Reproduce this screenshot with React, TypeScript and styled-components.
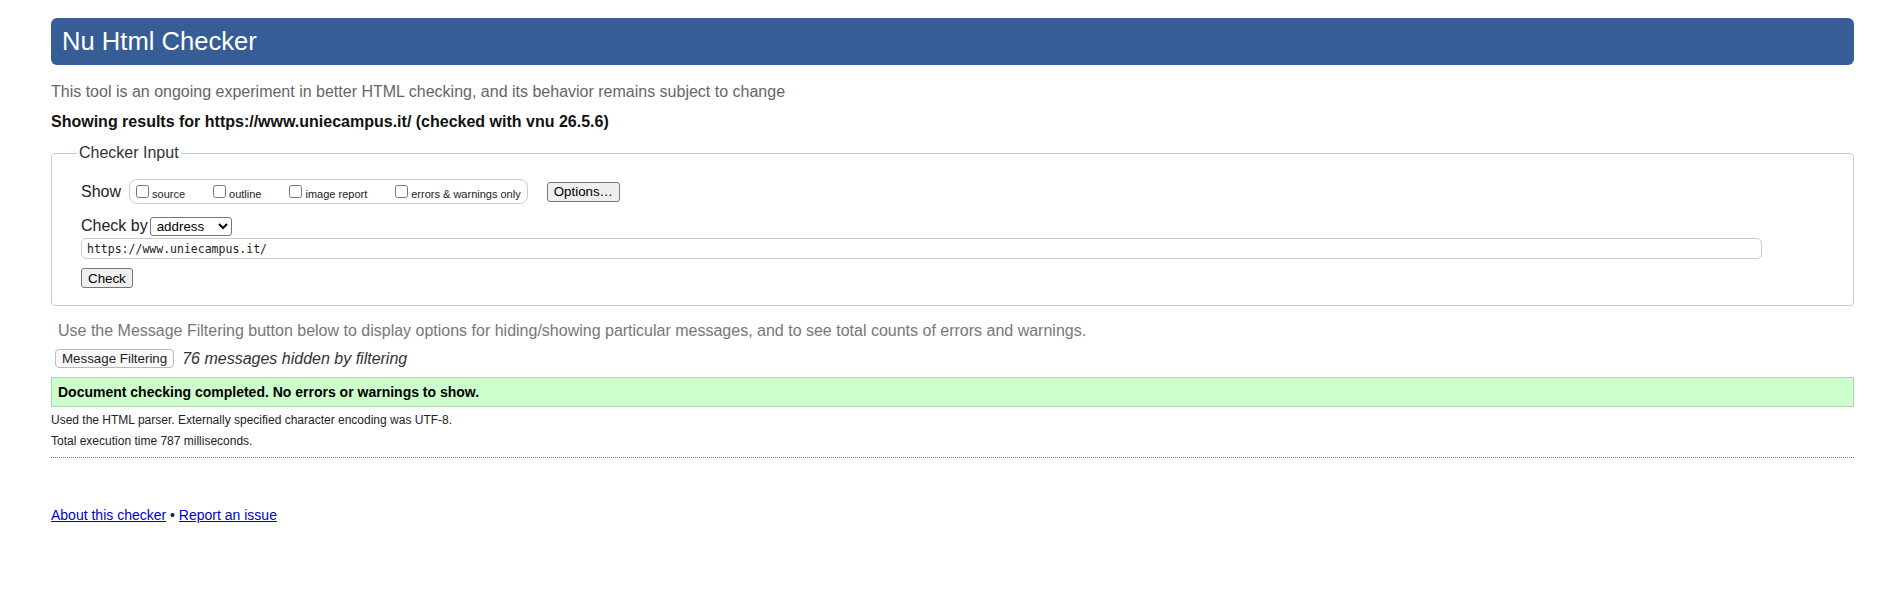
import React from 'react';
import styled, { createGlobalStyle } from 'styled-components';

const GlobalStyle = createGlobalStyle`
  html, body {
    margin: 0;
    padding: 0;
    background: #fff;
  }
  body {
    font-family: "Liberation Sans", Arial, sans-serif;
    color: #222;
  }
`;

const Page = styled.div`
  padding: 18px 46px 40px 51px;
`;

const Banner = styled.h1`
  margin: 0;
  height: 47px;
  padding-left: 11px;
  background: #365d95;
  border-radius: 6px;
  color: #fff;
  font-weight: normal;
  font-size: 25.6px;
  line-height: 47px;
`;

const Intro = styled.p`
  margin: 17px 0 0;
  font-size: 16px;
  line-height: 20px;
  color: #666;
`;

const Results = styled.p`
  margin: 10px 0 0;
  font-size: 16px;
  line-height: 20px;
  font-weight: bold;
  color: #111;
`;

const InputSet = styled.fieldset`
  margin: 11px 0 0;
  padding: 0 0 17px 29px;
  border: 1px solid #ccc;
  border-radius: 4px;
  min-width: 0;
`;

const Legend = styled.legend`
  margin-left: -4px;
  padding: 0 2px;
  font-size: 16px;
  line-height: 20px;
  color: #333;
`;

const Row = styled.div<{ $top: number; $height: number }>`
  display: flex;
  align-items: center;
  margin-top: ${(p) => p.$top}px;
  height: ${(p) => p.$height}px;
`;

const RowLabel = styled.span`
  font-size: 16px;
  color: #222;
`;

const OptionBox = styled.div`
  display: inline-flex;
  align-items: center;
  box-sizing: border-box;
  height: 25px;
  margin-left: 8px;
  padding: 0 6px 0 2px;
  border: 1px solid #ccc;
  border-radius: 8px;
`;

const CheckLabel = styled.label`
  display: inline-flex;
  align-items: center;
  margin-right: 24px;
  font-size: 11px;
  color: #222;

  &:last-child {
    margin-right: 0;
  }

  input {
    width: 13px;
    height: 13px;
    margin: 0 3px 0 4px;
  }

  span {
    padding-top: 4px;
  }
`;

const NativeButton = styled.button<{ $gap?: number }>`
  box-sizing: border-box;
  height: 20px;
  margin-left: ${(p) => p.$gap ?? 0}px;
  padding: 0 6px;
  background: #efefef;
  border: 1px solid #767676;
  border-radius: 3px;
  font-family: "Liberation Sans", Arial, sans-serif;
  font-size: 13.333px;
  color: #000;
`;

const MethodSelect = styled.select`
  box-sizing: border-box;
  width: 82px;
  height: 19px;
  margin-left: 2px;
  padding: 0 2px;
  background: #fff;
  border: 1px solid #767676;
  border-radius: 3px;
  font-family: "Liberation Sans", Arial, sans-serif;
  font-size: 13.333px;
  color: #000;
`;

const UrlField = styled.input`
  display: block;
  box-sizing: border-box;
  width: calc(100% - 91px);
  height: 21px;
  margin-top: 2px;
  padding: 0 5px;
  border: 1px solid #ccc;
  border-radius: 5px;
  font-family: "DejaVu Sans Mono", "Liberation Mono", monospace;
  font-size: 11.5px;
  color: #222;
  outline: none;
`;

const SubmitRow = styled.div`
  margin-top: 9px;
  height: 20px;
`;

const FilterNote = styled.p`
  margin: 15px 0 0;
  padding-left: 7px;
  font-size: 16px;
  line-height: 20px;
  color: #777;
`;

const FilterButton = styled.button`
  box-sizing: border-box;
  height: 19px;
  margin-left: 4px;
  padding: 0 6px;
  background: #fafafa;
  border: 1px solid #bbb;
  border-radius: 4px;
  font-family: "Liberation Sans", Arial, sans-serif;
  font-size: 13.333px;
  color: #222;
`;

const HiddenCount = styled.span`
  margin-left: 8px;
  font-size: 16px;
  font-style: italic;
  color: #333;
`;

const Success = styled.div`
  box-sizing: border-box;
  height: 30px;
  margin-top: 8px;
  padding-left: 6px;
  background: #ccffcc;
  border: 1px solid #b3d4b3;
  font-size: 14px;
  font-weight: bold;
  line-height: 28px;
  color: #000;
`;

const MetaList = styled.div`
  display: grid;
  row-gap: 7px;
  margin-top: 6px;
`;

const MetaLine = styled.p`
  margin: 0;
  font-size: 12px;
  line-height: 14px;
  color: #222;
`;

const DottedRule = styled.hr`
  height: 0;
  margin: 9px 0 0;
  border: 0;
  border-top: 1px dotted #777;
`;

const Footer = styled.p`
  margin: 49px 0 0;
  font-size: 14px;
  line-height: 16px;
  color: #222;

  a {
    color: #0000cc;
  }
`;

const showOptions = ['source', 'outline', 'image report', 'errors & warnings only'];

const App: React.FC = () => {
  return (
    <>
      <GlobalStyle />
      <Page>
        <Banner>Nu Html Checker</Banner>
        <Intro>
          This tool is an ongoing experiment in better HTML checking, and its behavior remains subject to change
        </Intro>
        <Results>Showing results for https://www.uniecampus.it/ (checked with vnu 26.5.6)</Results>

        <InputSet>
          <Legend>Checker Input</Legend>
          <Row $top={16} $height={25}>
            <RowLabel>Show</RowLabel>
            <OptionBox>
              {showOptions.map((name) => (
                <CheckLabel key={name}>
                  <input type="checkbox" />
                  <span>{name}</span>
                </CheckLabel>
              ))}
            </OptionBox>
            <NativeButton type="button" $gap={19}>
              Options…
            </NativeButton>
          </Row>
          <Row $top={12} $height={20}>
            <RowLabel>Check by</RowLabel>
            <MethodSelect defaultValue="address">
              <option value="address">address</option>
              <option value="file">file upload</option>
              <option value="textarea">text input</option>
            </MethodSelect>
          </Row>
          <UrlField type="text" defaultValue="https://www.uniecampus.it/" />
          <SubmitRow>
            <NativeButton type="button">Check</NativeButton>
          </SubmitRow>
        </InputSet>

        <FilterNote>
          Use the Message Filtering button below to display options for hiding/showing particular messages, and to
          see total counts of errors and warnings.
        </FilterNote>
        <Row $top={7} $height={21}>
          <FilterButton type="button">Message Filtering</FilterButton>
          <HiddenCount>76 messages hidden by filtering</HiddenCount>
        </Row>

        <Success>Document checking completed. No errors or warnings to show.</Success>

        <MetaList>
          <MetaLine>Used the HTML parser. Externally specified character encoding was UTF-8.</MetaLine>
          <MetaLine>Total execution time 787 milliseconds.</MetaLine>
        </MetaList>
        <DottedRule />

        <Footer>
          <a href="#about">About this checker</a> • <a href="#issue">Report an issue</a>
        </Footer>
      </Page>
    </>
  );
};

export default App;
